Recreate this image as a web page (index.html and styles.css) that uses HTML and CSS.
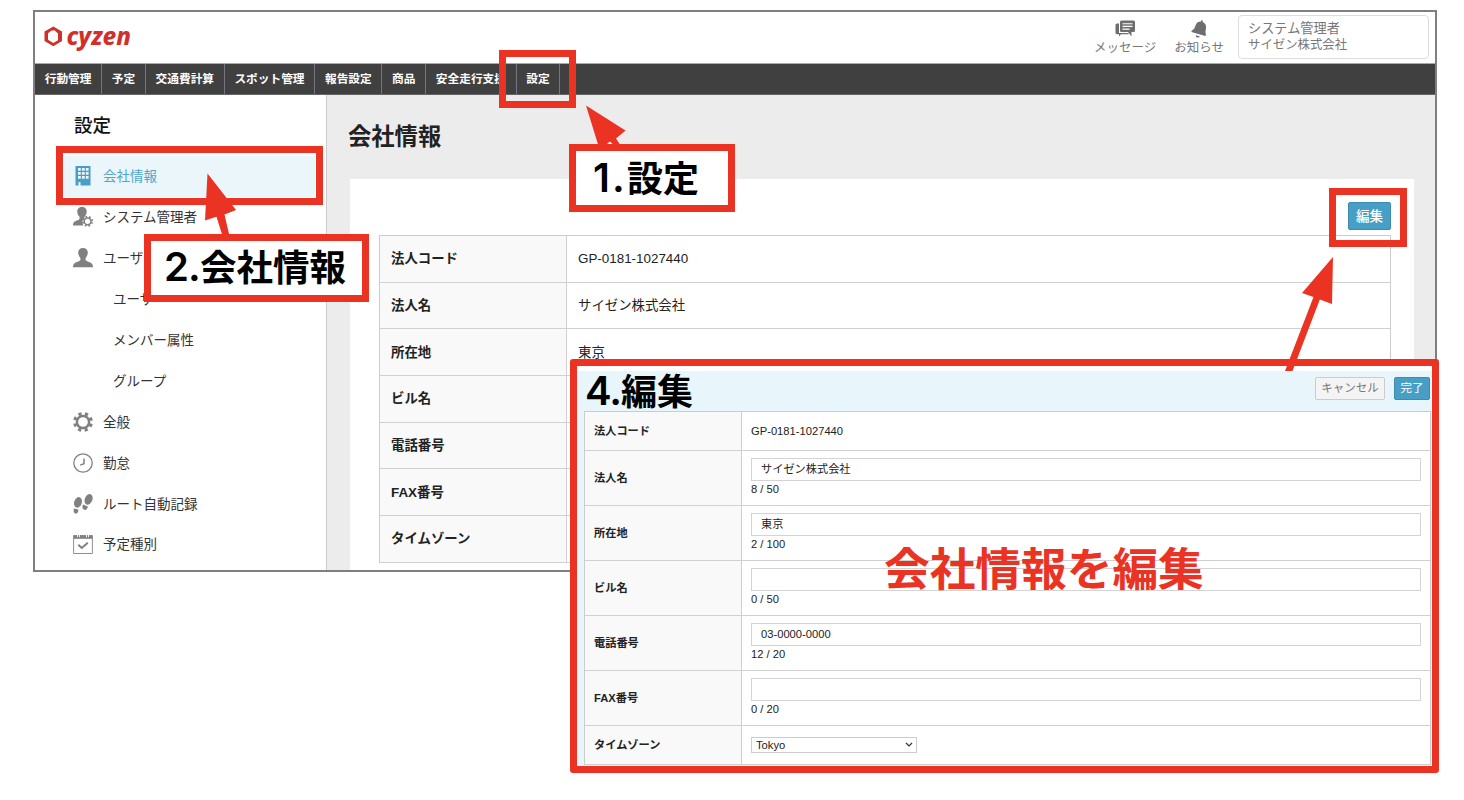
FILE: index.html
```html
<!DOCTYPE html>
<html lang="ja">
<head>
    <meta charset="UTF-8">
    <meta name="viewport" content="width=device-width, initial-scale=1.0">
    <title>会社情報 | cyzen</title>
    <link rel="stylesheet" href="styles.css">
</head>
<body>
    <div class="window">
        <header class="header">
            <svg class="logo" width="100" height="36" viewBox="0 0 100 36">
                <path fill="#d0302b" fill-rule="evenodd" d="M9.3 1.5 18 6.6V16l-8.7 5.2L.5 16V6.600ZM7.200 5.700 4 8.200v6.600l5.300 3.200 4.700-2.800V8.600L10.300 5.300Z"/>
                <text class="logo-text" x="22.5" y="20" textLength="64.5" lengthAdjust="spacingAndGlyphs">cyzen</text>
            </svg>
            <div class="header-right">
                <a class="header-link">
                    <svg width="20" height="17" viewBox="0 0 20 17">
                        <path fill="#6e6e6e" d="M.5 4.500q0-1.500 1.500-1.500h2v9.500h9.500v1.300H6l-2 2.200v-2.200H2q-1.500 0-1.500-1.500z"/>
                        <path fill="#6e6e6e" d="M6.300 0h12.200q1.500 0 1.500 1.500v8.500q0 1.500-1.500 1.500h-2v4.500L13 11.500H6.300q-1.300 0-1.300-1.500V1.500Q5 0 6.300 0z"/>
                        <path stroke="#fff" stroke-width="1.1" d="M7.500 3.200h10M7.500 5.900h10M7.500 8.600h7"/>
                    </svg>
                    <span>メッセージ</span>
                </a>
                <a class="header-link notice">
                    <svg width="16" height="18" viewBox="0 0 16 18">
                        <path fill="#6e6e6e" d="M10.500 0 11.800.4l-.2 1.600c2.600 1 3.800 3.200 3.400 6l-.6 4 .6 3-.7 1L.4 12l.3-1.300 2.500-1.900 1.600-4C5.800 2.500 7.800 1.400 10 1.500ZM4.700 15.200l4.200 1.200c-.6 1-1.600 1.400-2.600 1.100-1.100-.3-1.700-1.200-1.600-2.300Z"/>
                    </svg>
                    <span>お知らせ</span>
                </a>
                <div class="user-box">
                    <p class="user-name">システム管理者</p>
                    <p>サイゼン株式会社</p>
                </div>
            </div>
        </header>

        <nav class="navbar">
            <a>行動管理</a>
            <a>予定</a>
            <a>交通費計算</a>
            <a>スポット管理</a>
            <a>報告設定</a>
            <a>商品</a>
            <a>安全走行支援</a>
            <a>設定</a>
        </nav>

        <div class="body">
            <aside class="sidebar">
                <h2>設定</h2>
                <ul>
                    <li class="active">
                        <svg width="20" height="20" viewBox="0 0 20 20">
                            <path fill="#479fc6" fill-rule="evenodd" d="M2.500 0h15v19.500h-10V16h-2v3.500h-3zM5 2v2.800h2.800V2zm3.900 0v2.800h2.800V2zm3.900 0v2.800h2.800V2zM5 6v2.800h2.800V6zm3.900 0v2.800h2.800V6zm3.900 0v2.800h2.800V6zM5 10v2.800h2.800V10zm3.900 0v2.800h2.800V10zm3.900 0v2.800h2.800V10z"/>
                        </svg>
                        <span>会社情報</span>
                    </li>
                    <li>
                        <svg width="20" height="20" viewBox="0 0 20 20">
                            <path fill="#808080" d="M9 0c3 0 5 2 4.700 5-.2 2-1 3.500-2.200 4.700v1.400c-2 1.300-2.700 4.300-1.300 7.400H0c0-3.500 1.500-4 4-5 1.500-.6 2.500-1 2.500-2V9.700C5.200 8.500 4.500 7 4.300 5 4 2 6 0 9 0z"/>
                            <circle cx="14.600" cy="14.300" r="3.400" fill="#fff" stroke="#808080" stroke-width="1.500"/>
                            <circle cx="14.600" cy="14.300" r="4.700" fill="none" stroke="#808080" stroke-width="1.700" stroke-dasharray="1.700 1.990" transform="rotate(12 14.600 14.300)"/>
                        </svg>
                        <span>システム管理者</span>
                    </li>
                    <li>
                        <svg width="20" height="20" viewBox="0 0 20 20">
                            <path fill="#808080" d="M10 0c3 0 5 2 4.800 5-.2 2-1 3.700-2.200 5v1.800c0 1 1.200 1.300 2.800 2 3 1.200 4.600 2 4.600 5.400H0c0-3.400 1.600-4.200 4.600-5.400 1.600-.7 2.800-1 2.800-2V10C6.200 8.700 5.400 7 5.200 5 5 2 7 0 10 0z"/>
                        </svg>
                        <span>ユーザー</span>
                    </li>
                    <li class="sub"><span>ユーザー</span></li>
                    <li class="sub"><span>メンバー属性</span></li>
                    <li class="sub"><span>グループ</span></li>
                    <li>
                        <svg width="20" height="20" viewBox="0 0 20 20">
                            <circle cx="10" cy="10" r="6.100" fill="none" stroke="#808080" stroke-width="2.500"/>
                            <circle cx="10" cy="10" r="8.300" fill="none" stroke="#808080" stroke-width="3.200" stroke-dasharray="3.200 3.320" transform="rotate(11.500 10 10)"/>
                        </svg>
                        <span>全般</span>
                    </li>
                    <li>
                        <svg width="20" height="20" viewBox="0 0 20 20">
                            <circle cx="10" cy="10" r="9.200" fill="none" stroke="#808080" stroke-width="1.300"/>
                            <path fill="none" stroke="#808080" stroke-width="1.500" d="M11 5.500v5.300l-3.800 1.300"/>
                        </svg>
                        <span>勤怠</span>
                    </li>
                    <li>
                        <svg width="20" height="20" viewBox="0 0 20 20">
                            <g fill="#808080">
                                <ellipse cx="5" cy="8.400" rx="3.800" ry="5.400" transform="rotate(17 5 8.400)"/>
                                <path d="M.8 14.600l4.500 1c.2 2.300-.8 4.200-2.500 4.200S.2 17.500.8 14.600z"/>
                                <ellipse cx="15.600" cy="5.400" rx="3.800" ry="5.500" transform="rotate(22 15.600 5.400)"/>
                                <path d="M10.100 10.600l4.700 2c-.3 2.500-1.900 3.700-3.500 3.200-1.900-.6-2.400-2.700-1.200-5.200z"/>
                            </g>
                        </svg>
                        <span>ルート自動記録</span>
                    </li>
                    <li>
                        <svg width="20" height="20" viewBox="0 0 20 20">
                            <path fill="none" stroke="#909090" d="M.6 1.500h18.800v18H.6z"/>
                            <path fill="#808080" d="M.5 1.500h19v3.300H.5z"/>
                            <path stroke="#fff" stroke-width=".9" d="M4.500 0v3.200M6.500 0v3.200M13.500 0v3.200M15.500 0v3.200"/>
                            <path fill="none" stroke="#808080" stroke-width="2" d="M5.300 10.800l3.500 3.200 6-5.300"/>
                        </svg>
                        <span>予定種別</span>
                    </li>
                </ul>
            </aside>

            <main class="main">
                <h1>会社情報</h1>
                <section class="card">
                    <div class="card-actions">
                        <button class="btn btn-edit">編集</button>
                    </div>
                    <div class="info">
                        <div class="row"><div class="th">法人コード</div><div class="td">GP-0181-1027440</div></div>
                        <div class="row"><div class="th">法人名</div><div class="td">サイゼン株式会社</div></div>
                        <div class="row"><div class="th">所在地</div><div class="td">東京</div></div>
                        <div class="row"><div class="th">ビル名</div><div class="td"></div></div>
                        <div class="row"><div class="th">電話番号</div><div class="td"></div></div>
                        <div class="row"><div class="th">FAX番号</div><div class="td"></div></div>
                        <div class="row"><div class="th">タイムゾーン</div><div class="td"></div></div>
                    </div>
                </section>
            </main>
        </div>
    </div>

    <!-- Edit form laid over the window -->
    <section class="panel">
        <div class="panel-head">
            <h2><b>4.</b>編集</h2>
            <button class="btn btn-cancel">キャンセル</button>
            <button class="btn btn-done">完了</button>
        </div>
        <div class="form">
            <div class="row short"><div class="th">法人コード</div><div class="td">GP-0181-1027440</div></div>
            <div class="row">
                <div class="th">法人名</div>
                <div class="td"><div class="field">サイゼン株式会社</div><span>8 / 50</span></div>
            </div>
            <div class="row">
                <div class="th">所在地</div>
                <div class="td"><div class="field">東京</div><span>2 / 100</span></div>
            </div>
            <div class="row">
                <div class="th">ビル名</div>
                <div class="td"><div class="field"></div><span>0 / 50</span></div>
            </div>
            <div class="row">
                <div class="th">電話番号</div>
                <div class="td"><div class="field">03-0000-0000</div><span>12 / 20</span></div>
            </div>
            <div class="row">
                <div class="th">FAX番号</div>
                <div class="td"><div class="field"></div><span>0 / 20</span></div>
            </div>
            <div class="row short">
                <div class="th">タイムゾーン</div>
                <div class="td">
                    <div class="select">Tokyo
                        <svg width="8" height="6" viewBox="0 0 8 6"><path fill="none" stroke="#333" stroke-width="1.200" d="M1 1l3 3 3-3"/></svg>
                    </div>
                </div>
            </div>
        </div>
        <p class="panel-note">会社情報を編集</p>
    </section>

    <!-- Step marks and arrows -->
    <svg class="arrows" width="1464" height="800" viewBox="0 0 1464 800">
        <g fill="#eb3323">
            <path d="M586 105.500 625.500 130.500 616 138.500 621 146H598.500Z"/>
            <path d="M207.500 173.500 236 210 224.500 214.500 229.500 236H222.500L216.500 216.800 205 220.500Z"/>
            <path d="M1333 257 1332 304 1319.800 299.500 1292.500 371H1285L1313.500 297 1302 293Z"/>
        </g>
        <path fill="#fff" d="M607 144l3-2.500 2.500 2.500z"/>
    </svg>
    <div class="mark mark-nav"></div>
    <div class="mark mark-menu"></div>
    <div class="mark mark-edit"></div>
    <div class="mark step step-1"><b>1.</b>設定</div>
    <div class="mark step step-2"><b>2.</b>会社情報</div>
</body>
</html>
```
FILE: styles.css
```css
* {
    box-sizing: border-box;
}

body {
    position: relative;
    height: 800px;
    margin: 0;
    padding: 10px 0 0 33px;
    overflow: hidden;
    background-color: #fff;
    color: #222;
    font-family: "Liberation Sans", "Noto Sans CJK JP", sans-serif;
    font-size: 13.4px;
}

h1, h2, p, ul {
    margin: 0;
    padding: 0;
}

.window {
    width: 1404px;
    height: 562px;
    border: 2px solid #7f7f7f;
    overflow: hidden;
}

/* Header */
.header {
    display: flex;
    justify-content: space-between;
    height: 52px;
    padding: 3px 6px 0 9px;
    border-bottom: 1px solid #aaa;
}

.logo {
    margin-top: 10px;
    overflow: visible;
}

.logo-text {
    fill: #d0302b;
    font-family: "Noto Sans", "Open Sans", sans-serif;
    font-size: 25.5px;
    font-weight: 800;
    font-style: italic;
}

.header-right {
    display: flex;
    color: #777;
    font-size: 12.5px;
}

.header-link {
    display: flex;
    flex-direction: column;
    align-items: center;
    margin-right: 18px;
    padding-top: 5px;
}

.header-link svg {
    height: 18px;
}

.header-link span {
    line-height: 18px;
    margin-top: 1px;
}

.notice {
    margin-right: 14px;
}

.user-box {
    width: 191px;
    height: 44px;
    padding: 4px 9px;
    border: 1px solid #ddd;
    border-radius: 4px;
    font-size: 12.4px;
    line-height: 17px;
}

.user-name {
    font-size: 13.2px;
}

/* Global menu */
.navbar {
    display: flex;
    height: 31px;
    background-color: #404040;
    border-bottom: 1px solid #666;
}

.navbar a {
    padding: 0 9.7px;
    border-right: 1px solid #777582;
    color: #fff;
    font-size: 11.7px;
    font-weight: bold;
    line-height: 30px;
    white-space: nowrap;
}

.body {
    display: flex;
    height: 475px;
}

/* Side menu */
.sidebar {
    width: 292px;
    border-right: 1px solid #ccc;
}

.sidebar h2 {
    height: 61px;
    padding-left: 39px;
    color: #111;
    font-size: 18.5px;
    font-weight: 500;
    line-height: 61px;
}

.sidebar ul {
    list-style: none;
}

.sidebar li {
    display: flex;
    align-items: center;
    gap: 10px;
    height: 40.9px;
    margin: 0 11px 0 29px;
    padding-left: 9px;
    font-size: 13.5px;
    color: #333;
}

.sidebar li span {
    margin-bottom: 2px;
}

.sidebar li.sub {
    padding-left: 49px;
}

.sidebar li.active {
    background-color: #eaf6fa;
    color: #4fa5ca;
}

/* Company details */
.main {
    flex: 1;
    padding: 0 21px 0 23px;
    background-color: #ececec;
}

.main h1 {
    height: 84px;
    margin-left: -2px;
    font-size: 23.3px;
    font-weight: bold;
    line-height: 84px;
}

.card {
    height: 400px;
    padding: 23px 23px 0 29px;
    background-color: #fff;
}

.card-actions {
    display: flex;
    justify-content: flex-end;
    height: 33px;
}

.btn {
    padding: 0 0 2px;
    border: 1px solid #3d8bb0;
    border-radius: 2px;
    background-color: #479fc6;
    color: #fff;
    font-family: inherit;
}

.btn-edit {
    width: 43px;
    height: 28px;
    font-size: 13.5px;
    font-weight: 500;
}

.row {
    display: flex;
    border-bottom: 1px solid #d0d0d0;
}

.th {
    display: flex;
    align-items: center;
    padding-bottom: 3px;
    background-color: #f9f9f9;
    border-right: 1px solid #d0d0d0;
    font-weight: bold;
}

.info {
    border: 1px solid #ccc;
    border-bottom: 0;
}

.info .row {
    height: 46.7px;
}

.info .th {
    width: 187px;
    padding-left: 11px;
}

.info .td {
    display: flex;
    align-items: center;
    padding: 0 0 3px 11px;
}

.info .row:first-child .td {
    padding-bottom: 0;
}

/* Edit form */
.panel {
    position: absolute;
    left: 570px;
    top: 359px;
    width: 869px;
    height: 414px;
    border: 7px solid #eb3323;
    border-radius: 3px;
    background-color: #e8f6fc;
    font-size: 11.2px;
}

.panel-head {
    display: flex;
    gap: 9px;
    height: 45px;
    padding: 11px 2px 0 8px;
    border-top: 5px solid #fff;
}

.panel-head h2 {
    flex: 1;
    z-index: 1;
    margin-top: -14px;
    color: #000;
    font-family: "Noto Sans CJK JP", sans-serif;
    font-size: 36px;
    font-weight: bold;
    line-height: 42px;
}

.panel-head .btn {
    height: 23px;
    margin-top: -5px;
    padding-bottom: 3px;
    font-size: 11.5px;
}

.panel-head .btn-cancel {
    width: 70px;
    border-color: #ccc;
    background-color: #f4f4f4;
    color: #777;
}

.panel-head .btn-done {
    width: 36px;
}

.form {
    margin: 0 1px 0 7px;
    border: 1px solid #ccc;
    border-bottom: 0;
    background-color: #fff;
}

.form .row {
    height: 55px;
}

.form .row.short {
    height: 39px;
}

.form .th {
    width: 157px;
    padding-left: 9px;
}

.form .td {
    display: flex;
    flex: 1;
    flex-direction: column;
    padding: 7px 9px 0;
}

.form .short .td {
    justify-content: center;
    padding-top: 0;
}

.field {
    height: 23px;
    padding-left: 9px;
    border: 1px solid #d4d4d4;
    line-height: 20px;
}

.td span {
    line-height: 17px;
}

.select {
    display: flex;
    align-items: center;
    justify-content: space-between;
    width: 166px;
    height: 16px;
    padding: 0 3px 0 4px;
    border: 1px solid #ccc;
}

.panel-note {
    position: absolute;
    left: 307px;
    top: 180px;
    color: #eb3323;
    font-size: 45.7px;
    font-weight: bold;
    line-height: 50px;
}

/* Step marks */
.arrows {
    position: absolute;
    left: 0;
    top: 0;
}

.mark {
    position: absolute;
    border: 7px solid #eb3323;
}

.mark-nav {
    left: 499px;
    top: 50px;
    width: 77px;
    height: 58px;
}

.mark-menu {
    left: 56px;
    top: 146px;
    width: 267px;
    height: 59px;
}

.mark-edit {
    left: 1329px;
    top: 188px;
    width: 78px;
    height: 59px;
}

.step {
    background-color: #fff;
    color: #000;
    font-family: "Noto Sans CJK JP", sans-serif;
    font-size: 36px;
    font-weight: bold;
    line-height: 50px;
    white-space: nowrap;
}

.step b,
.panel-head b {
    display: inline-block;
    width: 36px;
    font-family: Inter, sans-serif;
    font-size: 40px;
    font-weight: 600;
    letter-spacing: -1px;
    line-height: 40px;
}

.step-1 {
    left: 569px;
    top: 144px;
    width: 166px;
    height: 68px;
    padding-left: 17px;
}

.step-1 b {
    width: 34px;
    letter-spacing: 2px;
}

.step-2 {
    left: 144px;
    top: 234px;
    width: 225px;
    height: 68px;
    padding-left: 13px;
    font-size: 36.5px;
}
```
